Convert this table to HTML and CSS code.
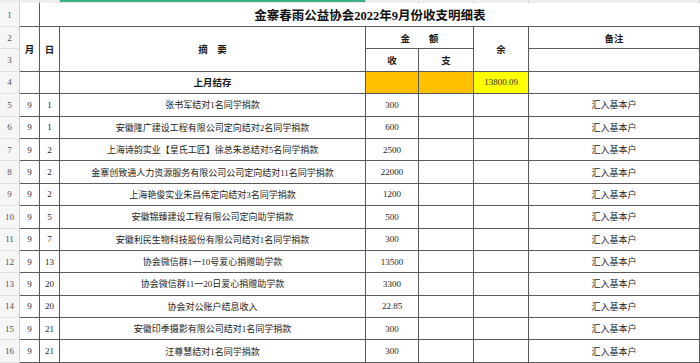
FILE: index.html
```html
<!DOCTYPE html>
<html lang="zh-CN">
<head>
<meta charset="utf-8">
<title>金寨春雨公益协会2022年9月份收支明细表</title>
<link rel="stylesheet" href="styles.css">
</head>
<body>
<div class="sheet">
  <div class="strip"></div><div class="strip"></div><div class="strip"></div><div class="strip sel"></div><div class="strip"></div><div class="strip"></div><div class="strip"></div><div class="strip"></div>

  <div class="rh">1</div><div class="c"></div><div class="c title">金寨春雨公益协会2022年9月份收支明细表</div>

  <div class="rh">2</div>
  <div class="c hd rspan">月</div>
  <div class="c hd rspan">日</div>
  <div class="c hd rspan">摘　要</div>
  <div class="c hd cspan">金　　额</div>
  <div class="c hd rspan">余</div>
  <div class="c hd">备注</div>
  <div class="rh">3</div>
  <div class="c hd">收</div>
  <div class="c hd">支</div>
  <div class="c"></div>

  <div class="rh">4</div><div class="c"></div><div class="c"></div><div class="c hd">上月结存</div><div class="c orange"></div><div class="c orange"></div><div class="c yellow">13800.09</div><div class="c"></div>

  <div class="rh">5</div><div class="c">9</div><div class="c">1</div><div class="c">张书军结对1名同学捐款</div><div class="c">300</div><div class="c"></div><div class="c"></div><div class="c">汇入基本户</div>
  <div class="rh">6</div><div class="c">9</div><div class="c">1</div><div class="c">安徽隆广建设工程有限公司定向结对2名同学捐款</div><div class="c">600</div><div class="c"></div><div class="c"></div><div class="c">汇入基本户</div>
  <div class="rh">7</div><div class="c">9</div><div class="c">2</div><div class="c">上海诗韵实业【皇氏工匠】徐总朱总结对5名同学捐款</div><div class="c">2500</div><div class="c"></div><div class="c"></div><div class="c">汇入基本户</div>
  <div class="rh">8</div><div class="c">9</div><div class="c">2</div><div class="c">金寨创致通人力资源服务有限公司公司定向结对11名同学捐款</div><div class="c">22000</div><div class="c"></div><div class="c"></div><div class="c">汇入基本户</div>
  <div class="rh">9</div><div class="c">9</div><div class="c">2</div><div class="c">上海艳俊实业朱昌伟定向结对3名同学捐款</div><div class="c">1200</div><div class="c"></div><div class="c"></div><div class="c">汇入基本户</div>
  <div class="rh">10</div><div class="c">9</div><div class="c">5</div><div class="c">安徽锦臻建设工程有限公司定向助学捐款</div><div class="c">500</div><div class="c"></div><div class="c"></div><div class="c">汇入基本户</div>
  <div class="rh">11</div><div class="c">9</div><div class="c">7</div><div class="c">安徽利民生物科技股份有限公司结对1名同学捐款</div><div class="c">300</div><div class="c"></div><div class="c"></div><div class="c">汇入基本户</div>
  <div class="rh">12</div><div class="c">9</div><div class="c">13</div><div class="c">协会微信群1一10号爱心捐赠助学款</div><div class="c">13500</div><div class="c"></div><div class="c"></div><div class="c">汇入基本户</div>
  <div class="rh">13</div><div class="c">9</div><div class="c">20</div><div class="c">协会微信群11一20日爱心捐赠助学款</div><div class="c">3300</div><div class="c"></div><div class="c"></div><div class="c">汇入基本户</div>
  <div class="rh">14</div><div class="c">9</div><div class="c">20</div><div class="c">协会对公账户结息收入</div><div class="c">22.85</div><div class="c"></div><div class="c"></div><div class="c">汇入基本户</div>
  <div class="rh">15</div><div class="c">9</div><div class="c">21</div><div class="c">安徽印季摄影有限公司结对1名同学捐款</div><div class="c">300</div><div class="c"></div><div class="c"></div><div class="c">汇入基本户</div>
  <div class="rh">16</div><div class="c">9</div><div class="c">21</div><div class="c">汪尊慧结对1名同学捐款</div><div class="c">300</div><div class="c"></div><div class="c"></div><div class="c">汇入基本户</div>
</div>
</body>
</html>
```

FILE: styles.css
```css
html, body {
  margin: 0;
  padding: 0;
  background: #ffffff;
  overflow: hidden;
}

.sheet {
  display: grid;
  grid-template-columns: 20px 20px 20px 306px 53px 55px 55px 171px;
  grid-template-rows: 3px 24px repeat(15, 22.4px);
  width: 700px;
  font-family: "Liberation Serif", "Noto Sans CJK SC", serif;
  color: #1e1e1e;
}

.strip {
  background: #eeeeee;
  border-right: 1px solid #d6d6d6;
}

.strip.sel {
  box-shadow: inset 0 2px 0 #3fae7e;
}

.rh {
  box-sizing: border-box;
  background: #f6f6f6;
  border-right: 1px solid #cdcdcd;
  border-bottom: 1px solid #e0e0e0;
  color: #505050;
  font-size: 9px;
  display: flex;
  align-items: center;
  justify-content: center;
}

.c {
  box-sizing: border-box;
  border-right: 1px solid #5a5a5a;
  border-bottom: 1px solid #5a5a5a;
  display: flex;
  align-items: center;
  justify-content: center;
  font-size: 9px;
  white-space: nowrap;
  overflow: hidden;
}

.title {
  grid-column: span 6;
  border-right: none;
  font-size: 12.5px;
  font-weight: 700;
  color: #111;
}

.rspan {
  grid-row: span 2;
}

.cspan {
  grid-column: span 2;
}

.hd {
  font-size: 9.5px;
  font-weight: 700;
  color: #1a1a1a;
}

.orange {
  background: #ffc000;
}

.yellow {
  background: #ffff00;
  color: #333;
}
```
